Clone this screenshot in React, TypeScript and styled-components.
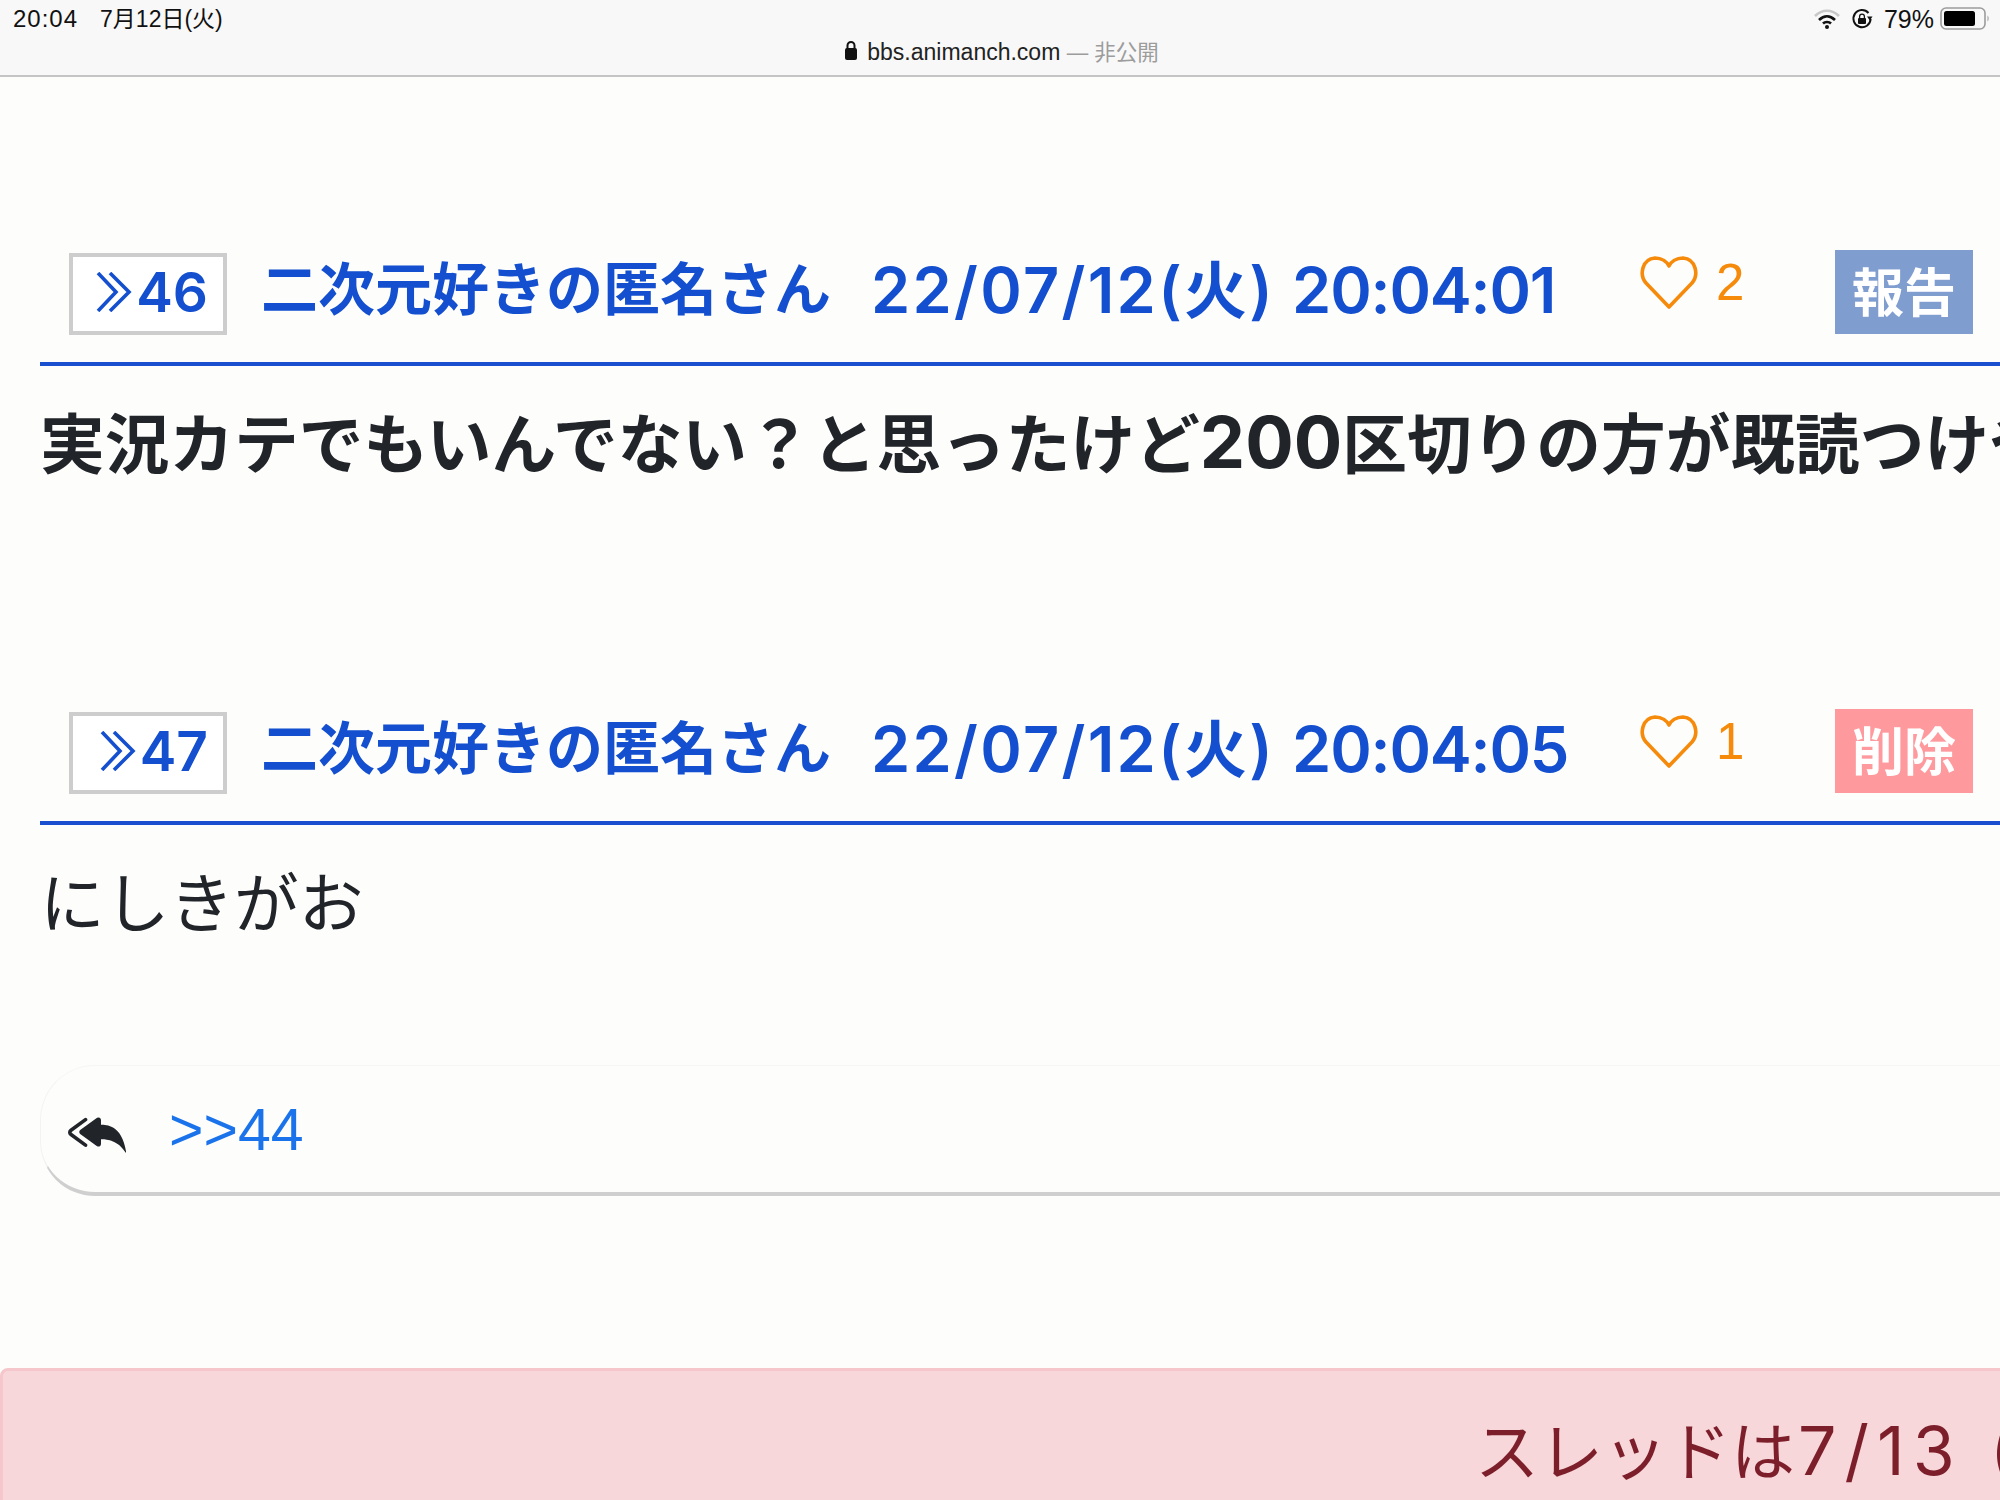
import React from 'react';
import styled, { createGlobalStyle } from 'styled-components';
import { BsReplyAllFill } from 'react-icons/bs';

const GlobalStyle = createGlobalStyle`
  html, body {
    margin: 0;
    padding: 0;
    width: 2000px;
    height: 1500px;
    overflow: hidden;
    background: #fdfdfc;
    font-family: "Liberation Sans", "Noto Sans CJK JP", sans-serif;
  }
`;

const Page = styled.div`
  width: 2000px;
  height: 1500px;
  overflow: hidden;
`;

const TopBar = styled.header`
  box-sizing: border-box;
  height: 77px;
  margin-bottom: 172px;
  padding: 6px 10px 0 13px;
  background: #f8f8f8;
  border-bottom: 2px solid #c4c4c4;
`;

const StatusRow = styled.div`
  display: flex;
  align-items: center;
  justify-content: space-between;
  height: 26px;
  color: #111;
  font-size: 25px;
  line-height: 26px;
`;

const Clock = styled.div`
  display: flex;
  align-items: center;
  gap: 22px;
  font-size: 23px;
`;

const Time = styled.span`
  font-size: 24px;
  letter-spacing: 1px;
`;

const StatusIcons = styled.div`
  display: flex;
  align-items: center;
  gap: 11px;
`;

const BatteryGauge = styled.svg`
  margin-left: -5px;
`;

const UrlRow = styled.div`
  display: flex;
  align-items: center;
  justify-content: center;
  gap: 9px;
  height: 28px;
  margin-top: 4px;
  font-size: 23px;
  color: #222;
`;

const Muted = styled.span`
  color: #9c9c9c;
  font-size: 21.5px;
`;

const Post = styled.section<{ $height: number }>`
  padding-left: 40px;
  height: ${(p) => p.$height}px;
`;

const PostHead = styled.div`
  display: flex;
  align-items: center;
  height: 85px;
  padding: 0 0 28px 29px;
  border-bottom: 4px solid #1a4fd0;
  color: #134fce;
  font-weight: 600;
`;

const ResBox = styled.div`
  box-sizing: border-box;
  display: flex;
  align-items: center;
  justify-content: flex-end;
  gap: 4px;
  width: 158px;
  height: 82px;
  margin-top: 4px;
  padding: 0 15px 4px 0;
  border: 4px solid #cdcdcd;
  background: #fff;
  font-family: "Inter", "Noto Sans CJK JP", sans-serif;
  font-size: 55px;
  font-weight: 600;
`;

const Name = styled.span`
  margin: -14px 0 0 34px;
  width: 610px;
  font-family: "Noto Sans CJK JP", sans-serif;
  font-size: 57px;
  font-weight: 700;
  white-space: nowrap;
`;

const Stamp = styled.span`
  display: flex;
  align-items: baseline;
  gap: 17px;
  width: 770px;
  margin-top: -12px;
  font-family: "Inter", "Noto Sans CJK JP", sans-serif;
  font-size: 63px;
  white-space: nowrap;
`;

const StampDate = styled.span`
  letter-spacing: 2.3px;
`;

const StampTime = styled.span`
  letter-spacing: -1.2px;
`;

const Like = styled.div`
  display: flex;
  align-items: center;
  gap: 18px;
  width: 195px;
  margin: -18px 0 0 -1px;
  color: #f58a0b;
  font-size: 51px;
  font-weight: 400;
  font-family: "Liberation Sans", sans-serif;
`;

const ActionButton = styled.div<{ $tone: string }>`
  display: flex;
  align-items: center;
  justify-content: center;
  width: 138px;
  height: 84px;
  padding-bottom: 4px;
  box-sizing: border-box;
  background: ${(p) => p.$tone};
  color: #fff;
  font-family: "Noto Sans CJK JP", sans-serif;
  font-size: 52px;
  font-weight: 700;
`;

const Body = styled.p<{ $bold?: boolean }>`
  margin: 36px 0 0;
  color: #212529;
  font-family: "Noto Sans CJK JP", sans-serif;
  font-size: 64.7px;
  line-height: 76px;
  font-weight: ${(p) => (p.$bold ? 700 : 400)};
  white-space: nowrap;
`;

const Digits = styled.span`
  font-family: "Inter", sans-serif;
  font-size: 72px;
`;

const Quote = styled.div`
  display: flex;
  align-items: center;
  box-sizing: border-box;
  height: 131px;
  margin-left: 40px;
  padding: 2px 0 0 27px;
  gap: 43px;
  border-radius: 55px 0 0 55px;
  border-bottom: 4px solid #cfcfcf;
  border-left: 1px solid #f3f3f3;
  border-top: 1px solid #f6f6f6;
  color: #1a73ea;
  font-size: 59px;
`;

const Alert = styled.div`
  box-sizing: border-box;
  width: 2040px;
  height: 200px;
  margin-top: 172px;
  padding: 31px 0 0 1472px;
  border: 3px solid #f5c6cb;
  border-radius: 8px;
  background: #f8d7da;
  color: #7d1f2b;
  font-family: "Noto Sans CJK JP", sans-serif;
  font-size: 64px;
  font-weight: 400;
  line-height: 90px;
  white-space: nowrap;
  overflow: hidden;
`;

const AlertDate = styled.span`
  margin-left: 3px;
  font-family: "Inter", sans-serif;
  font-size: 68px;
  font-weight: 400;
  letter-spacing: 8px;
`;

const ReplyIcon = styled(BsReplyAllFill)`
  width: 58px;
  height: 58px;
  margin-top: 4px;
  color: #212529;
`;

const Chevrons = () => (
  <svg width="36" height="40" viewBox="0 0 36 40" fill="none" stroke="#134fce" strokeWidth="3.6">
    <polyline points="2,1 20,20 2,39" />
    <polyline points="14,1 33,20 14,39" />
  </svg>
);

const HeartIcon = () => (
  <svg width="58" height="54" viewBox="0 0 58 54" fill="none" stroke="#f58a0b" strokeWidth="3.6" strokeLinejoin="round">
    <path d="M29 51 L6 27 C-1 19 2 3 15 2 C22 2 27 6 29 10 C31 6 36 2 43 2 C56 3 59 19 52 27 Z" />
  </svg>
);

const Lock = () => (
  <svg width="14" height="20" viewBox="0 0 14 20">
    <rect x="1" y="8" width="12" height="12" rx="2" fill="#111" />
    <path d="M3.5 9V5.5a3.5 3.5 0 0 1 7 0V9" fill="none" stroke="#111" strokeWidth="2" />
  </svg>
);

const Wifi = () => (
  <svg width="26" height="20" viewBox="0 0 26 20" fill="none">
    <path d="M1 7 C8 0 18 0 25 7" stroke="#c8c8c8" strokeWidth="2.6" />
    <path d="M5 11 C10 6 16 6 21 11" stroke="#111" strokeWidth="2.6" />
    <path d="M9 14.5 C11 12.5 15 12.5 17 14.5" stroke="#111" strokeWidth="2.6" />
    <circle cx="13" cy="18" r="2" fill="#111" />
  </svg>
);

const RotationLock = () => (
  <svg width="22" height="22" viewBox="0 0 22 22" fill="none">
    <path d="M17.5 5 A8.6 8.6 0 1 0 19.6 11" stroke="#111" strokeWidth="2" />
    <path d="M16 8.5 L21.5 8.5 L18.8 12.5 Z" fill="#111" />
    <rect x="7" y="10" width="8" height="6" rx="1" fill="#111" />
    <path d="M8.6 10V8.5a2.4 2.4 0 0 1 4.8 0V10" stroke="#111" strokeWidth="1.3" />
  </svg>
);

const Battery = () => (
  <BatteryGauge width="50" height="24" viewBox="0 0 50 24">
    <rect x="1" y="1" width="44" height="21" rx="5" fill="none" stroke="#9c9c9c" strokeWidth="1.6" />
    <rect x="4" y="4" width="31" height="15" rx="2.5" fill="#000" />
    <path d="M47.5 8.5 C49 9.5 49 13.5 47.5 14.5 Z" fill="#9c9c9c" />
  </BatteryGauge>
);

const posts = [
  {
    no: 46,
    date: '22/07/12(火)',
    time: '20:04:01',
    likes: 2,
    action: '報告',
    tone: '#7f9dcf',
    height: 459,
    body: (
      <>
        実況カテでもいんでない？と思ったけど<Digits>200</Digits>区切りの方が既読つけやすいんだよね
      </>
    ),
    bold: true,
  },
  {
    no: 47,
    date: '22/07/12(火)',
    time: '20:04:05',
    likes: 1,
    action: '削除',
    tone: '#fe9a9e',
    height: 357,
    body: 'にしきがお',
    bold: false,
  },
];

const App = () => {
  return (
    <Page>
      <GlobalStyle />
      <TopBar>
        <StatusRow>
          <Clock>
            <Time>20:04</Time>
            <span>7月12日(火)</span>
          </Clock>
          <StatusIcons>
            <Wifi />
            <RotationLock />
            <span>79%</span>
            <Battery />
          </StatusIcons>
        </StatusRow>
        <UrlRow>
          <Lock />
          <span>
            bbs.animanch.com <Muted>— 非公開</Muted>
          </span>
        </UrlRow>
      </TopBar>
      {posts.map((post) => (
        <Post key={post.no} $height={post.height}>
          <PostHead>
            <ResBox>
              <Chevrons />
              {post.no}
            </ResBox>
            <Name>二次元好きの匿名さん</Name>
            <Stamp>
              <StampDate>{post.date}</StampDate>
              <StampTime>{post.time}</StampTime>
            </Stamp>
            <Like>
              <HeartIcon />
              {post.likes}
            </Like>
            <ActionButton $tone={post.tone}>{post.action}</ActionButton>
          </PostHead>
          <Body $bold={post.bold}>{post.body}</Body>
        </Post>
      ))}
      <Quote>
        <ReplyIcon />
        <span>&gt;&gt;44</span>
      </Quote>
      <Alert>
        スレッドは<AlertDate>7/13 (水)</AlertDate>
      </Alert>
    </Page>
  );
};

export default App;
